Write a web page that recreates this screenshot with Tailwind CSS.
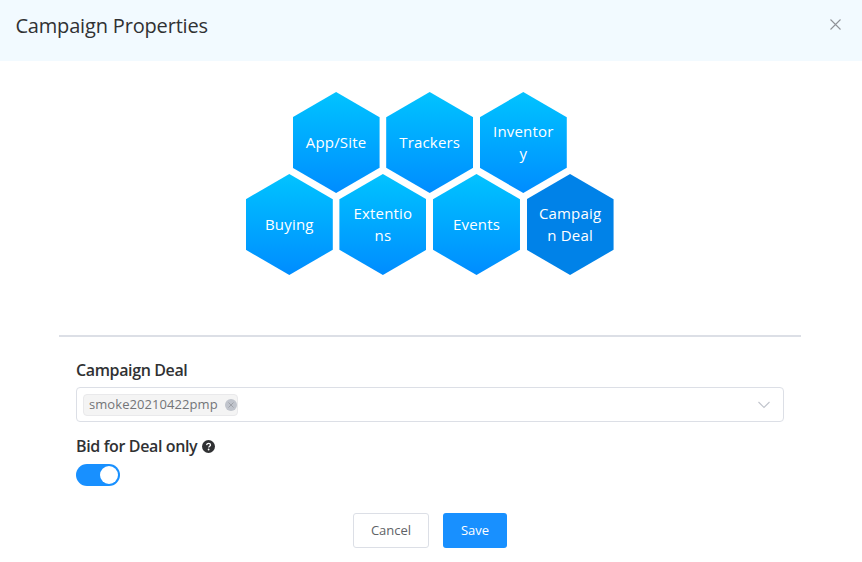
<!DOCTYPE html>
<html lang="en">
<head>
    <meta charset="UTF-8">
    <meta name="viewport" content="width=device-width, initial-scale=1.0">
    <title>Campaign Properties</title>
    <script src="https://cdn.jsdelivr.net/npm/@tailwindcss/browser@4"></script>
</head>
<body class="bg-white font-['Open_Sans',sans-serif] text-[#303133] h-[562px] overflow-hidden">

    <!-- Header -->
    <header class="h-[61px] bg-[#f2faff] flex items-start justify-between pl-[15.4px] pr-5">
        <h1 class="mt-[13px] text-xl leading-[26px] tracking-[-0.17px]">Campaign Properties</h1>
        <button class="mt-[18px] text-[#909399]" aria-label="Close">
            <svg class="w-[13px] h-[13px]" viewBox="0 0 13 13" fill="none" stroke="currentColor" stroke-width="1.1">
                <path d="M1.5 1.5l10 10M11.5 1.5l-10 10" />
            </svg>
        </button>
    </header>

    <!-- Steps -->
    <nav class="w-[859.4px] pt-[31px] flex flex-col items-center text-white text-[15px] leading-[22px] tracking-[0.18px] text-center">
        <div id="row-top" class="flex gap-[6.6px]"></div>
        <div id="row-bottom" class="flex gap-[6.6px] -mt-[19px]"></div>
    </nav>

    <main class="mt-[60px] mx-[59px] w-[742px]">
        <div class="h-0.5 bg-[#dcdfe6]"></div>

        <!-- Deal form -->
        <div class="px-[17px] pt-[21px]">
            <label class="block text-base leading-6 font-semibold tracking-[-0.37px]">Campaign Deal</label>
            <div class="mt-[5px] h-[35px] border border-[#dcdfe6] rounded flex items-center justify-between pl-[6px] pr-[13px]">
                <span class="h-[22px] w-[155px] bg-[#f4f4f4] border border-[#e9e9eb] rounded flex items-center justify-between pl-[5px] text-[13px] tracking-[0.07px] text-[#737478]">
                    smoke20210422pmp
                    <svg class="w-3 h-3" viewBox="0 0 12 12">
                        <circle cx="6" cy="6" r="6" fill="#c0c4cc" />
                        <path d="M3.5 3.5l5 5M8.5 3.5l-5 5" stroke="#909399" stroke-width="0.7" />
                    </svg>
                </span>
                <svg class="w-3 h-2" viewBox="0 0 12 8" fill="none" stroke="#c0c4cc" stroke-width="1.1">
                    <path d="M0.5 1l5.5 5.5L11.5 1" />
                </svg>
            </div>

            <div class="mt-3 flex items-center gap-[5px]">
                <label class="text-base leading-6 font-semibold tracking-[-0.37px]">Bid for Deal only</label>
                <svg class="w-[13px] h-[13px]" viewBox="0 0 13 13">
                    <circle cx="6.5" cy="6.5" r="6.5" fill="#303133" />
                    <path d="M4.6 5.1c.2-1.2 1-1.7 2-1.7 1.1 0 1.9.7 1.9 1.6 0 1.3-1.8 1.3-1.8 2.6" fill="none" stroke="#fff" stroke-width="1.3" />
                    <circle cx="6.6" cy="9.5" r="0.9" fill="#fff" />
                </svg>
            </div>
            <div class="mt-[6px] w-11 h-[22px] rounded-full bg-[#1890ff] flex items-center justify-end pr-[2px]">
                <span class="w-[18px] h-[18px] rounded-full bg-white"></span>
            </div>
        </div>
    </main>

    <!-- Actions -->
    <footer class="w-[860px] mt-[27px] flex justify-center gap-[14px] text-[13px]">
        <button class="w-[76px] h-[35px] rounded-[3px] border border-[#dcdfe6] text-[#606266]">Cancel</button>
        <button class="w-16 h-[35px] rounded-[3px] bg-[#1890ff] text-white">Save</button>
    </footer>

    <script>
        const steps = {
            "row-top": ["App/Site", "Trackers", "Inventory"],
            "row-bottom": ["Buying", "Extentions", "Events", "Campaign Deal"]
        };
        const active = "Campaign Deal";

        Object.keys(steps).forEach(id => {
            document.getElementById(id).innerHTML = steps[id].map(step => `
                <div class="w-[87px] h-[101px] px-[11px] pb-[2px] flex items-center justify-center [clip-path:polygon(50%_0,100%_25%,100%_75%,50%_100%,0_75%,0_25%)]
                    ${step === active ? 'bg-[#0082e8]' : 'bg-linear-to-b from-[#05c3ff] to-[#008cff]'}">
                    <span class="w-full wrap-anywhere">${step}</span>
                </div>
            `).join("");
        });
    </script>

</body>
</html>
